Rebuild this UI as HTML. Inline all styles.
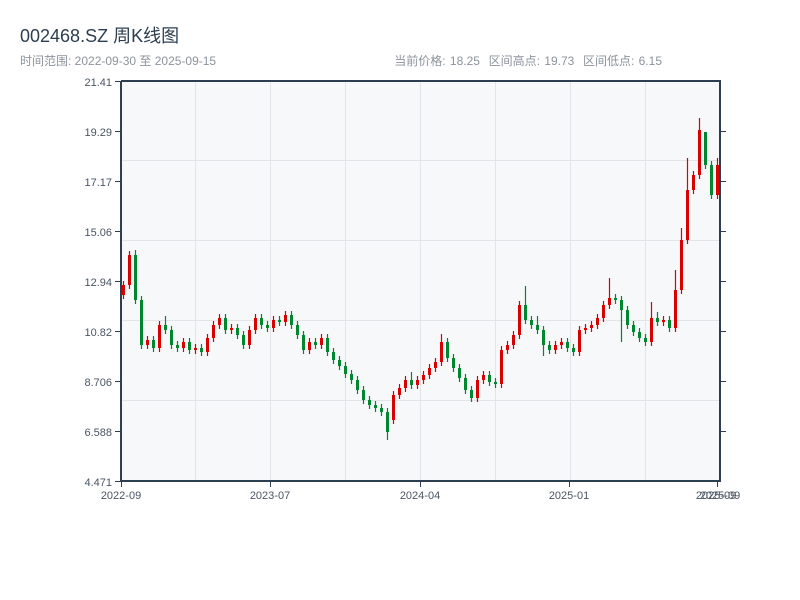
<!DOCTYPE html>
<html><head><meta charset="utf-8"><style>
body{margin:0;background:#fff;width:800px;height:600px;overflow:hidden;font-family:"Liberation Sans","Noto Sans CJK SC",sans-serif}
.t{position:absolute;left:20px;top:22px;font-size:18px;color:#2c3e50}
.s{position:absolute;left:20px;top:52px;font-size:12px;color:#8c939c}
.r{position:absolute;right:138px;top:52px;font-size:12px;color:#8c939c;word-spacing:1px}
svg{position:absolute;left:0;top:0}
</style></head><body>
<div class="t">002468.SZ 周K线图</div>
<div class="s">时间范围: 2022-09-30 至 2025-09-15</div>
<div class="r">当前价格: 18.25&nbsp; 区间高点: 19.73&nbsp; 区间低点: 6.15</div>
<svg width="800" height="600" font-family="Liberation Sans, sans-serif" font-size="11" fill="#4a5563">
<rect x="121" y="81" width="599" height="400" fill="#f7f8fa"/>
<g stroke="#e2e4ea" stroke-width="1">
<line x1="195.5" y1="81" x2="195.5" y2="481"/><line x1="270.5" y1="81" x2="270.5" y2="481"/><line x1="345.5" y1="81" x2="345.5" y2="481"/><line x1="420.5" y1="81" x2="420.5" y2="481"/><line x1="495.5" y1="81" x2="495.5" y2="481"/><line x1="570.5" y1="81" x2="570.5" y2="481"/><line x1="645.5" y1="81" x2="645.5" y2="481"/>
<line x1="121" y1="160.5" x2="720" y2="160.5"/><line x1="121" y1="240.5" x2="720" y2="240.5"/><line x1="121" y1="320.5" x2="720" y2="320.5"/><line x1="121" y1="400.5" x2="720" y2="400.5"/>
</g>
<path fill="#d90000" d="M122 285h3v10h-3zM128 255h3v30h-3zM146 340h3v5h-3zM158 325h3v23h-3zM182 342h3v6h-3zM194 348h3v2h-3zM206 338h3v14h-3zM212 325h3v13h-3zM218 318h3v7h-3zM230 328h3v2h-3zM248 330h3v15h-3zM254 318h3v12h-3zM272 320h3v8h-3zM284 315h3v7h-3zM308 342h3v8h-3zM320 338h3v7h-3zM392 395h3v25h-3zM398 388h3v7h-3zM404 380h3v8h-3zM416 380h3v5h-3zM422 375h3v5h-3zM428 368h3v7h-3zM434 362h3v6h-3zM440 342h3v20h-3zM476 380h3v18h-3zM482 375h3v5h-3zM500 350h3v34h-3zM506 345h3v5h-3zM512 335h3v10h-3zM518 305h3v30h-3zM554 345h3v5h-3zM560 342h3v3h-3zM578 330h3v22h-3zM584 328h3v2h-3zM590 325h3v3h-3zM596 318h3v7h-3zM602 305h3v13h-3zM608 298h3v7h-3zM650 318h3v24h-3zM662 320h3v2h-3zM674 290h3v38h-3zM680 240h3v50h-3zM686 190h3v50h-3zM692 175h3v15h-3zM698 130h3v45h-3zM716 165h3v30h-3z"/>
<path stroke="#d90000" stroke-width="1.2" d="M123.5 281V299M129.5 251V289M147.5 336V349M159.5 321V352M183.5 338V352M195.5 344V354M207.5 334V356M213.5 321V342M219.5 314V329M231.5 324V334M249.5 326V349M255.5 314V334M273.5 316V332M285.5 311V326M309.5 338V354M321.5 334V349M393.5 391V424M399.5 384V399M405.5 376V392M417.5 376V389M423.5 371V384M429.5 364V379M435.5 358V372M441.5 334V366M477.5 376V402M483.5 371V384M501.5 346V388M507.5 341V354M513.5 331V349M519.5 301V339M555.5 341V354M561.5 338V349M579.5 326V356M585.5 324V334M591.5 321V332M597.5 314V329M603.5 301V322M609.5 278V309M651.5 302V346M663.5 316V326M675.5 270V332M681.5 228V294M687.5 158V244M693.5 171V194M699.5 118V179M717.5 158V199"/>
<path fill="#00872f" d="M134 255h3v45h-3zM140 300h3v45h-3zM152 340h3v8h-3zM164 325h3v5h-3zM170 330h3v15h-3zM176 345h3v3h-3zM188 342h3v8h-3zM200 348h3v4h-3zM224 318h3v12h-3zM236 328h3v7h-3zM242 335h3v10h-3zM260 318h3v7h-3zM266 325h3v3h-3zM278 320h3v2h-3zM290 315h3v10h-3zM296 325h3v10h-3zM302 335h3v15h-3zM314 342h3v3h-3zM326 338h3v14h-3zM332 352h3v8h-3zM338 360h3v6h-3zM344 366h3v8h-3zM350 374h3v6h-3zM356 380h3v10h-3zM362 390h3v10h-3zM368 400h3v5h-3zM374 405h3v3h-3zM380 408h3v4h-3zM386 412h3v20h-3zM410 380h3v5h-3zM446 342h3v16h-3zM452 358h3v10h-3zM458 368h3v10h-3zM464 378h3v12h-3zM470 390h3v8h-3zM488 375h3v7h-3zM494 382h3v2h-3zM524 305h3v15h-3zM530 320h3v5h-3zM536 325h3v5h-3zM542 330h3v15h-3zM548 345h3v5h-3zM566 342h3v6h-3zM572 348h3v4h-3zM614 298h3v2h-3zM620 300h3v10h-3zM626 310h3v15h-3zM632 325h3v7h-3zM638 332h3v6h-3zM644 338h3v4h-3zM656 318h3v4h-3zM668 320h3v8h-3zM704 132h3v33h-3zM710 165h3v30h-3z"/>
<path stroke="#00872f" stroke-width="1.2" d="M135.5 250V304M141.5 296V349M153.5 336V352M165.5 316V334M171.5 326V349M177.5 341V352M189.5 338V354M201.5 344V356M225.5 314V334M237.5 324V339M243.5 331V349M261.5 314V329M267.5 321V332M279.5 316V326M291.5 311V329M297.5 321V339M303.5 331V354M315.5 338V349M327.5 334V356M333.5 348V364M339.5 356V370M345.5 362V378M351.5 370V384M357.5 376V394M363.5 386V404M369.5 396V409M375.5 401V412M381.5 404V416M387.5 408V440M411.5 372V389M447.5 338V362M453.5 354V372M459.5 364V382M465.5 374V394M471.5 386V402M489.5 371V386M495.5 378V388M525.5 286V324M531.5 316V329M537.5 316V334M543.5 326V356M549.5 341V354M567.5 338V352M573.5 344V356M615.5 294V304M621.5 296V342M627.5 306V329M633.5 321V336M639.5 328V342M645.5 334V346M657.5 312V326M669.5 316V332M705.5 132V169M711.5 161V199"/>
<g stroke="#2c3e50" stroke-width="2" fill="none">
<line x1="121" y1="81" x2="721" y2="81"/><line x1="121" y1="81" x2="121" y2="482"/><line x1="120" y1="481" x2="721" y2="481"/><line x1="720" y1="81" x2="720" y2="481"/>
</g>
<g stroke="#2c3e50" stroke-width="1">
<line x1="115" y1="81.5" x2="121" y2="81.5"/><line x1="115" y1="131.5" x2="121" y2="131.5"/><line x1="115" y1="181.5" x2="121" y2="181.5"/><line x1="115" y1="231.5" x2="121" y2="231.5"/><line x1="115" y1="281.5" x2="121" y2="281.5"/><line x1="115" y1="331.5" x2="121" y2="331.5"/><line x1="115" y1="381.5" x2="121" y2="381.5"/><line x1="115" y1="431.5" x2="121" y2="431.5"/><line x1="115" y1="481.5" x2="121" y2="481.5"/>
<line x1="720" y1="131.5" x2="726" y2="131.5"/><line x1="720" y1="181.5" x2="726" y2="181.5"/><line x1="720" y1="231.5" x2="726" y2="231.5"/><line x1="720" y1="281.5" x2="726" y2="281.5"/><line x1="720" y1="331.5" x2="726" y2="331.5"/><line x1="720" y1="381.5" x2="726" y2="381.5"/><line x1="720" y1="431.5" x2="726" y2="431.5"/>
<line x1="121.5" y1="481" x2="121.5" y2="487"/><line x1="270.5" y1="481" x2="270.5" y2="487"/><line x1="420.5" y1="481" x2="420.5" y2="487"/><line x1="569.5" y1="481" x2="569.5" y2="487"/><line x1="717.5" y1="481" x2="717.5" y2="487"/>
</g>
<g text-anchor="end">
<text x="112" y="86">21.41</text><text x="112" y="136">19.29</text><text x="112" y="186">17.17</text><text x="112" y="236">15.06</text><text x="112" y="286">12.94</text><text x="112" y="336">10.82</text><text x="112" y="386">8.706</text><text x="112" y="436">6.588</text><text x="112" y="486">4.471</text>
</g>
<g text-anchor="middle">
<text x="121" y="499">2022-09</text><text x="270" y="499">2023-07</text><text x="420" y="499">2024-04</text><text x="569" y="499">2025-01</text><text x="716" y="499">2025-09</text><text x="720" y="499">2025-09</text>
</g>
</svg>
</body></html>
